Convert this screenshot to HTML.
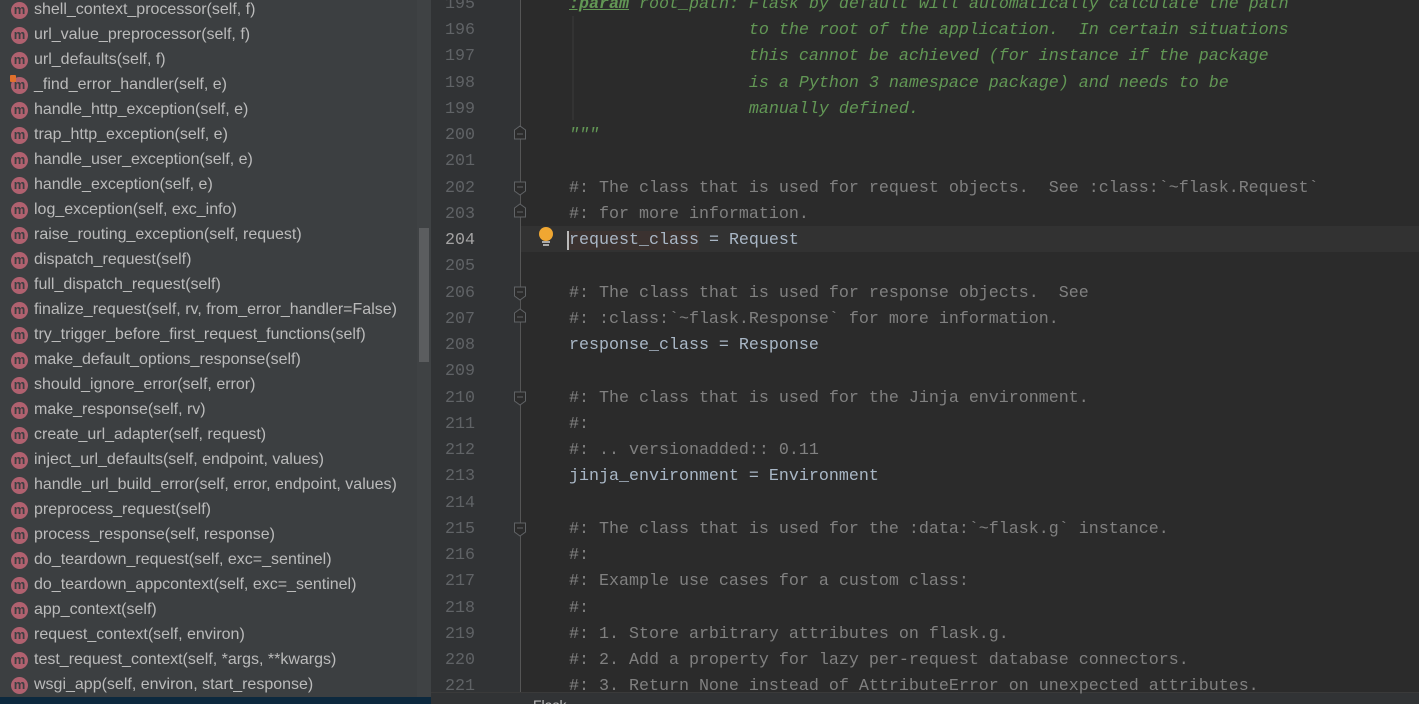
<!DOCTYPE html>
<html><head><meta charset="utf-8"><style>
*{margin:0;padding:0;box-sizing:border-box}
html,body{width:1419px;height:704px;overflow:hidden}
body{background:#2b2b2b;position:relative;font-family:"Liberation Sans",sans-serif}
#left{position:absolute;left:0;top:0;width:431px;height:704px;background:#3c3f41;overflow:hidden}
.row{position:absolute;left:0;height:25px;width:419px;color:#bbbbbb;font-size:16px;line-height:25px;white-space:nowrap}
.row .ic{position:absolute;left:11px;top:4px;width:17px;height:17px;border-radius:50%;background:#b0616f;color:#3c3f41;font-size:13px;line-height:15px;text-align:center;font-weight:bold}
.row .t{position:absolute;left:34px;top:-1px}
#sb{position:absolute;left:419px;top:228px;width:10px;height:134px;background:#5b5d5f}
#sbtrack{position:absolute;left:417px;top:0;width:14px;height:704px;background:#3f4244}
#gut{position:absolute;left:431px;top:0;width:89px;height:704px;background:#313335}
#gl{position:absolute;left:520px;top:0;width:1px;height:692px;background:#555555}
.ln{position:absolute;left:431px;width:44px;text-align:right;color:#606366;font-family:"Liberation Mono",monospace;font-size:16.67px;height:26.24px;line-height:26.24px}
.cl{position:absolute;left:569px;white-space:pre;font-family:"Liberation Mono",monospace;font-size:16.67px;height:26.24px;line-height:26.24px;color:#a9b7c6}
.c{color:#808080}
.d{color:#629755;font-style:italic}
#cur{position:absolute;left:521px;top:226px;width:898px;height:26px;background:#323232}
#bot{position:absolute;left:431px;top:692px;width:988px;height:12px;background:#313335;border-top:1px solid #3a3a3a;overflow:hidden}
#botl{position:absolute;left:0;top:697px;width:431px;height:7px;background:#0d293e}
</style></head><body>
<div id="left">
<div id="sbtrack"></div><div id="sb"></div>
</div>
<div id="gut"></div>
<div id="cur"></div>
<div id="gl"></div>
<div id="bot"><span style="position:absolute;left:102px;top:4px;color:#bbb;font-size:14px">Flask</span></div>
<div id="botl"></div>
<script>
const items=["shell_context_processor(self, f)","url_value_preprocessor(self, f)","url_defaults(self, f)","_find_error_handler(self, e)","handle_http_exception(self, e)","trap_http_exception(self, e)","handle_user_exception(self, e)","handle_exception(self, e)","log_exception(self, exc_info)","raise_routing_exception(self, request)","dispatch_request(self)","full_dispatch_request(self)","finalize_request(self, rv, from_error_handler=False)","try_trigger_before_first_request_functions(self)","make_default_options_response(self)","should_ignore_error(self, error)","make_response(self, rv)","create_url_adapter(self, request)","inject_url_defaults(self, endpoint, values)","handle_url_build_error(self, error, endpoint, values)","preprocess_request(self)","process_response(self, response)","do_teardown_request(self, exc=_sentinel)","do_teardown_appcontext(self, exc=_sentinel)","app_context(self)","request_context(self, environ)","test_request_context(self, *args, **kwargs)","wsgi_app(self, environ, start_response)"];
const L=document.getElementById('left');
items.forEach((t,i)=>{const d=document.createElement('div');d.className='row';d.style.top=(-2+i*25)+'px';
d.innerHTML='<span class="ic">m</span><span class="t"></span>'+(i==3?'<span style="position:absolute;left:10px;top:2px;width:6px;height:7px;background:#e0702c;border-radius:1px"></span>':'');
d.querySelector('.t').textContent=t;L.appendChild(d);});
const code={
195:'<span class="d"><b><u>:param</u></b> root_path: Flask by default will automatically calculate the path</span>',
196:'<span class="d">                  to the root of the application.  In certain situations</span>',
197:'<span class="d">                  this cannot be achieved (for instance if the package</span>',
198:'<span class="d">                  is a Python 3 namespace package) and needs to be</span>',
199:'<span class="d">                  manually defined.</span>',
200:'<span class="d">"""</span>',
201:'',
202:'<span class="c">#: The class that is used for request objects.  See :class:`~flask.Request`</span>',
203:'<span class="c">#: for more information.</span>',
204:'<span style="background:#3b3230;border-left:2px solid #bbb;margin-left:-2px">request_class</span> = Request',
205:'',
206:'<span class="c">#: The class that is used for response objects.  See</span>',
207:'<span class="c">#: :class:`~flask.Response` for more information.</span>',
208:'response_class = Response',
209:'',
210:'<span class="c">#: The class that is used for the Jinja environment.</span>',
211:'<span class="c">#:</span>',
212:'<span class="c">#: .. versionadded:: 0.11</span>',
213:'jinja_environment = Environment',
214:'',
215:'<span class="c">#: The class that is used for the :data:`~flask.g` instance.</span>',
216:'<span class="c">#:</span>',
217:'<span class="c">#: Example use cases for a custom class:</span>',
218:'<span class="c">#:</span>',
219:'<span class="c">#: 1. Store arbitrary attributes on flask.g.</span>',
220:'<span class="c">#: 2. Add a property for lazy per-request database connectors.</span>',
221:'<span class="c">#: 3. Return None instead of AttributeError on unexpected attributes.</span>'};
for(let n=195;n<=221;n++){const top=(-8+(n-195)*26.24)+'px';
const a=document.createElement('div');a.className='ln';a.style.top=top;a.textContent=n;if(n==204)a.style.color='#a4a3a3';document.body.appendChild(a);
const b=document.createElement('div');b.className='cl';b.style.top=top;b.innerHTML=code[n];document.body.appendChild(b);}
</script>
<svg style="position:absolute;left:0;top:0" width="1419" height="704">
<line x1="573" y1="16" x2="573" y2="120" stroke="#3b3b3b"/>
<g fill="#2b2b2b" stroke="#606366" stroke-width="1">
<path d="M514.5 130l5.5-4 5.5 4v9h-11z"/><line x1="517" y1="134" x2="523" y2="134"/>
<path d="M514.5 182h11v9l-5.5 4-5.5-4z"/><line x1="517" y1="187" x2="523" y2="187"/>
<path d="M514.5 208l5.5-4 5.5 4v9h-11z"/><line x1="517" y1="212" x2="523" y2="212"/>
<path d="M514.5 287h11v9l-5.5 4-5.5-4z"/><line x1="517" y1="292" x2="523" y2="292"/>
<path d="M514.5 313l5.5-4 5.5 4v9h-11z"/><line x1="517" y1="317" x2="523" y2="317"/>
<path d="M514.5 392h11v9l-5.5 4-5.5-4z"/><line x1="517" y1="397" x2="523" y2="397"/>
<path d="M514.5 523h11v9l-5.5 4-5.5-4z"/><line x1="517" y1="528" x2="523" y2="528"/>
</g>
<circle cx="546" cy="234" r="7" fill="#f0a732"/>
<rect x="542" y="241" width="8" height="2" fill="#aaa"/><rect x="543" y="244" width="6" height="2" fill="#aaa"/>
</svg>
</body></html>
